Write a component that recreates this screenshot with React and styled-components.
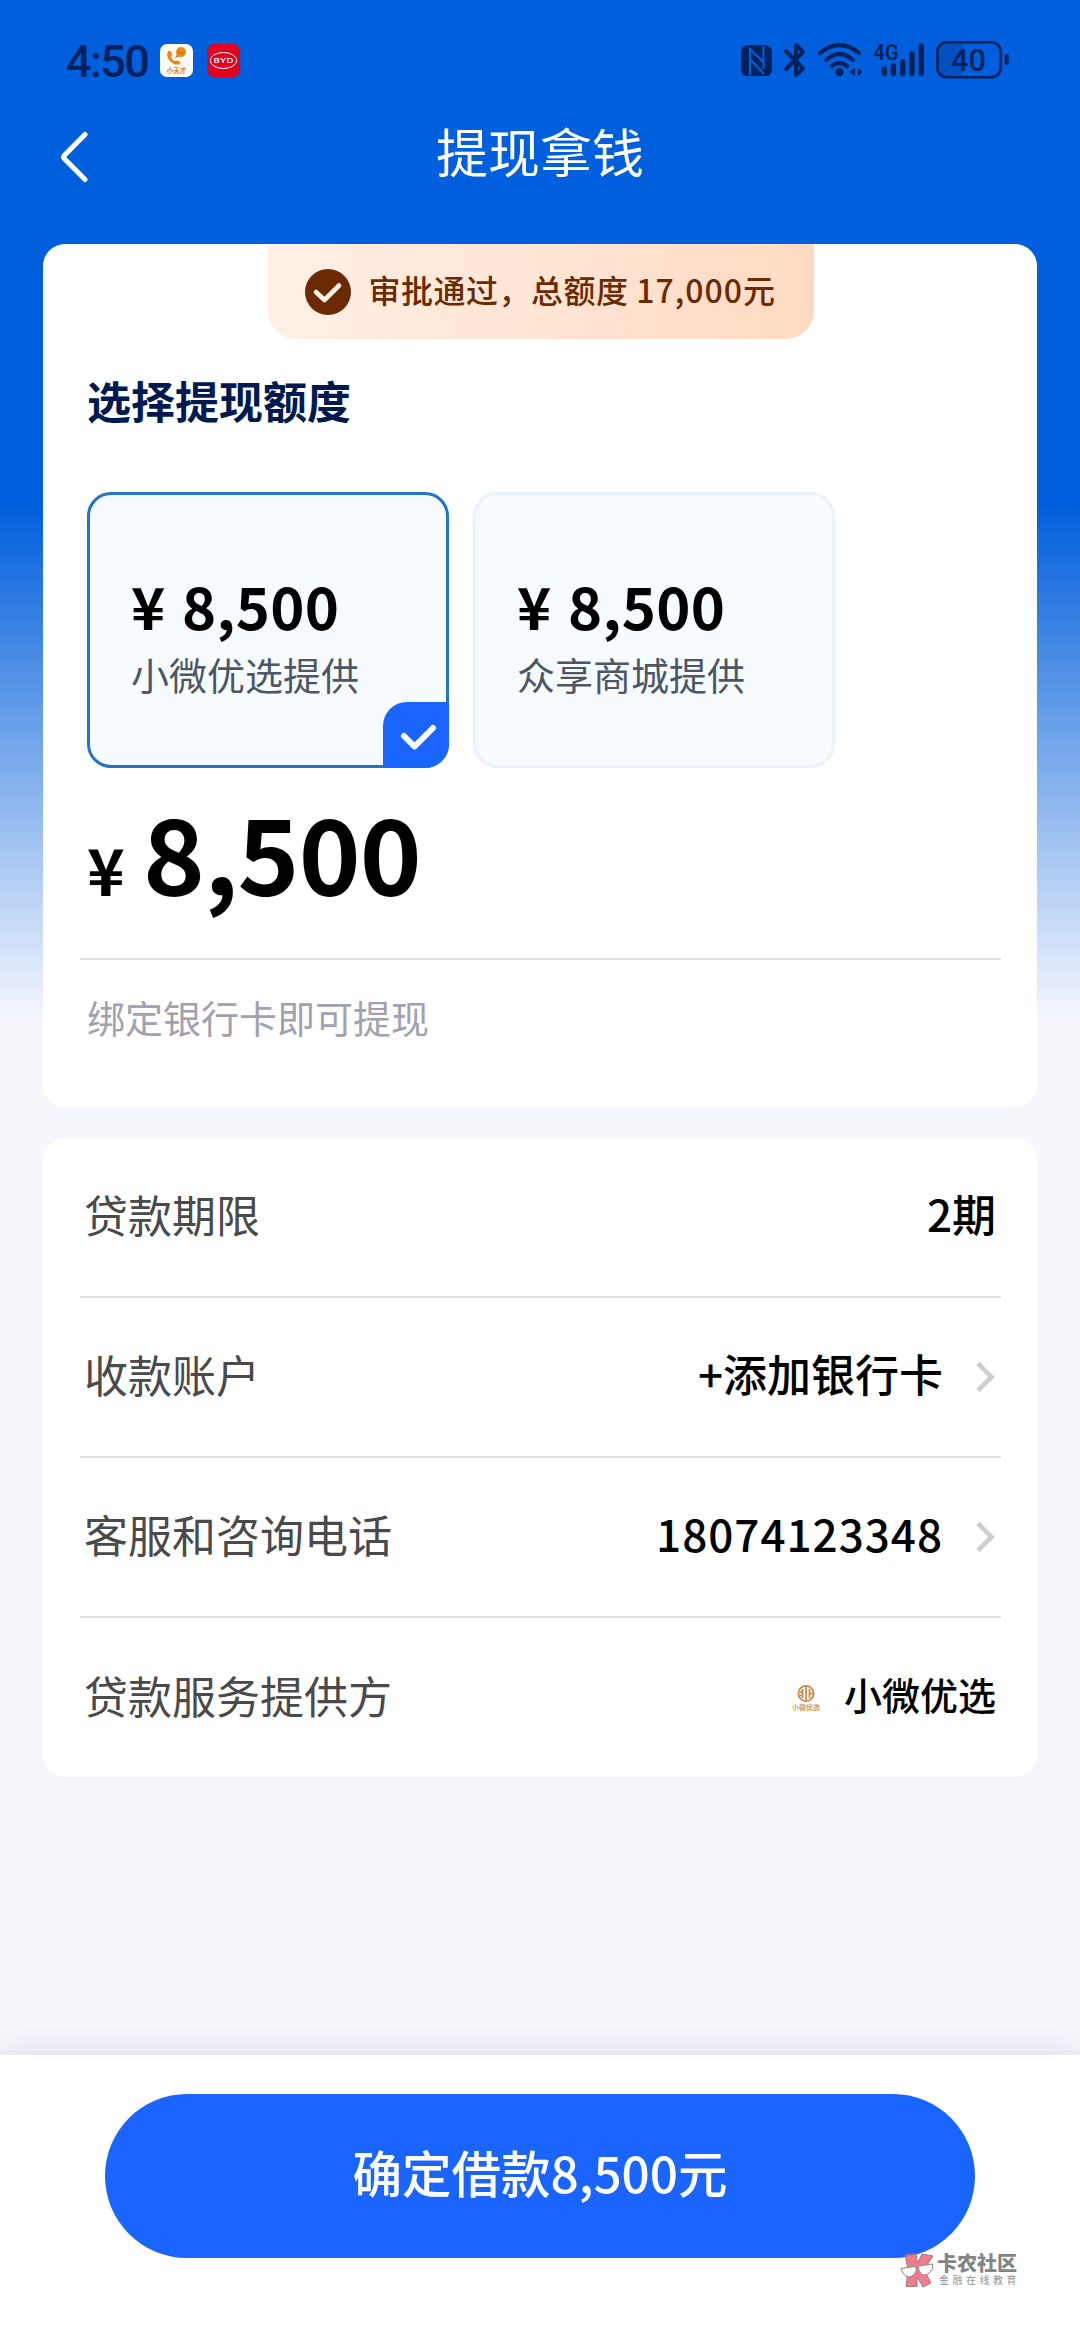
import React from 'react'
import styled, { createGlobalStyle } from 'styled-components'

const options = [
    { id: 1, amount: '8,500', provider: '小微优选提供' },
    { id: 2, amount: '8,500', provider: '众享商城提供' },
]

const App = () => {

    const [selected, setSelected] = React.useState(1)

    return (
        <Page>
            <GlobalStyle />

            <StatusBar>
                <StatusGroup>
                    <Clock>4:50</Clock>
                    <PhoneAppIcon />
                    <BydIcon />
                </StatusGroup>
                <SystemIcons />
            </StatusBar>

            <NavBar>
                <BackButton>
                    <svg width="28" height="52" viewBox="0 0 28 52" fill="none" stroke="#fff" strokeWidth="5" strokeLinecap="round" strokeLinejoin="round">
                        <path d="M25 3.5 L4.2 24.4 Q2.8 26 4.2 27.6 L25 48.5" />
                    </svg>
                </BackButton>
                <NavTitle>提现拿钱</NavTitle>
            </NavBar>

            <Content>
                <AmountCard>
                    <ApprovedBadge>
                        <svg width="46" height="46" viewBox="0 0 46 46" fill="none">
                            <circle cx="23" cy="23" r="23" fill="#6b2a02" />
                            <path d="M11 23 L19.5 31 L34 16.5" stroke="#fff1e6" strokeWidth="4.6" strokeLinecap="round" strokeLinejoin="round" />
                        </svg>
                        <BadgeText>审批通过，总额度 <Digits gap="1px">17,000</Digits>元</BadgeText>
                    </ApprovedBadge>

                    <SectionTitle>选择提现额度</SectionTitle>

                    <OptionList>
                        { options.map(item =>
                            <Option key={item.id} active={item.id === selected} onClick={() => setSelected(item.id)}>
                                <OptionPrice><OptionYen>¥</OptionYen>{item.amount}</OptionPrice>
                                <OptionProvider>{item.provider}</OptionProvider>
                                { item.id === selected &&
                                    <OptionCheck>
                                        <svg width="66" height="66" viewBox="0 0 66 66" fill="none" stroke="#fff" strokeWidth="6" strokeLinecap="round" strokeLinejoin="round">
                                            <path d="M21 34 L31.5 44.5 L50 26" />
                                        </svg>
                                    </OptionCheck>
                                }
                            </Option>
                        )}
                    </OptionList>

                    <Total>
                        <TotalYen>¥</TotalYen>
                        <TotalValue>8,500</TotalValue>
                    </Total>
                    <Hint>绑定银行卡即可提现</Hint>
                </AmountCard>

                <DetailCard>
                    <DetailRow>
                        <Label>贷款期限</Label>
                        <Value><ValueText>2期</ValueText></Value>
                    </DetailRow>
                    <DetailRow>
                        <Label>收款账户</Label>
                        <Value><ValueText>+添加银行卡</ValueText><Chevron /></Value>
                    </DetailRow>
                    <DetailRow>
                        <Label>客服和咨询电话</Label>
                        <Value><ValueText><Digits gap="1px">18074123348</Digits></ValueText><Chevron /></Value>
                    </DetailRow>
                    <DetailRow>
                        <Label>贷款服务提供方</Label>
                        <Value small>
                            <ProviderLogo />
                            <ValueText>小微优选</ValueText>
                        </Value>
                    </DetailRow>
                </DetailCard>
            </Content>

            <Footer>
                <SubmitButton>确定借款8,500元</SubmitButton>
            </Footer>

            <Watermark>
                <WatermarkLogo />
                <WatermarkText>
                    <WatermarkName>卡农社区</WatermarkName>
                    <WatermarkSub>金融在线教育</WatermarkSub>
                </WatermarkText>
            </Watermark>
        </Page>
    )
}

const PhoneAppIcon = () => (
    <AppIcon bg="#fbfbf4">
        <svg width="33" height="33" viewBox="0 0 33 33">
            <path d="M8 7 q3 -1 4 3 q0 2 -1 3 q1 3 4 4 q2 -1 4 0 q2 2 1 3 q-3 1 -6 0 q-6 -3 -7 -9 z" fill="#e88a1a" />
            <circle cx="21" cy="8" r="5" fill="#e88a1a" />
            <path d="M17 10 l-2 4 l5 -1.5 z" fill="#e88a1a" />
            <path d="M18.5 8.5 q2.5 2.5 5 0" stroke="#a85c08" fill="none" />
            <text x="16.5" y="28.5" textAnchor="middle" fontSize="6.5" fontWeight="700" fill="#d9821a">小天才</text>
        </svg>
    </AppIcon>
)

const BydIcon = () => (
    <AppIcon bg="#e3001f">
        <svg width="33" height="33" viewBox="0 0 33 33">
            <ellipse cx="16.5" cy="16.5" rx="13.2" ry="8" fill="none" stroke="#fff" strokeWidth="1" />
            <text x="16.5" y="18.9" textAnchor="middle" textLength="20" lengthAdjust="spacingAndGlyphs" fontSize="6.5" fontWeight="500" fontFamily="Inter" fill="#fff">BYD</text>
        </svg>
    </AppIcon>
)

const SystemIcons = () => (
    <svg width="272" height="40" viewBox="0 0 272 40" fill="none">
        {/* nfc */}
        <path d="M9 5 H24 Q32 5 32 13 V28 Q32 36 27 36 H6 Q1 36 1 28 V13 Q1 5 9 5 Z" fill="#00225c" />
        <path d="M10 35 V9 L24 23 M10 19 L24 34 M23.500 6 V29" stroke="#005fdc" strokeWidth="2" />
        {/* bluetooth */}
        <path d="M46 11 L63 28.5 L56 35 V5 L63 12 L46 29" stroke="#00225c" strokeWidth="4" strokeLinejoin="round" strokeLinecap="round" />
        {/* wifi */}
        <g stroke="#00225c" strokeWidth="4.2" strokeLinecap="round">
            <path d="M80 13 Q99.5 -3 119 13" />
            <path d="M86 20 Q99.5 8 113 20" />
            <path d="M92 26 Q99.5 20 107 26" />
        </g>
        <circle cx="99.5" cy="32" r="4.2" fill="#00225c" />
        <path d="M115 28 V36 L109 32 Z M118 28 V36 L122.5 32 Z" fill="#00225c" />
        {/* mobile signal */}
        <text x="133.5" y="19.5" fontSize="22" fontWeight="600" fontFamily="Roboto" textLength="25" lengthAdjust="spacingAndGlyphs" fill="#00225c">4G</text>
        <g stroke="#00225c" strokeWidth="5.4" strokeLinecap="round">
            <path d="M144.3 29 V33.5 M153.3 26 V33.5 M162.700 22 V33.5 M172 14 V33.5 M181.3 6 V33.5" />
        </g>
        {/* battery */}
        <path d="M206 3 H222 V37 H206 Q198 37 198 29 V11 Q198 3 206 3 Z" fill="#0050bf" />
        <rect x="197.3" y="2.3" width="63.5" height="35" rx="9.5" stroke="#00225c" strokeWidth="2.6" />
        <text x="228.5" y="31" textAnchor="middle" fontSize="32" fontWeight="500" fontFamily="Roboto" textLength="35" lengthAdjust="spacingAndGlyphs" fill="#00225c">40</text>
        <rect x="264.7" y="14" width="4" height="11" rx="2" fill="#00225c" />
    </svg>
)

const Chevron = () => (
    <ChevronBox width="20" height="32" viewBox="0 0 20 32" fill="none" stroke="#cfcfcf" strokeWidth="4.6">
        <path d="M2 2.5 L15.5 16 L2 29.5" />
    </ChevronBox>
)

const ProviderLogo = () => (
    <ProviderLogoBox width="30" height="28" viewBox="0 0 30 28" fill="none">
        <circle cx="15" cy="9.5" r="7.6" stroke="#cf8a45" strokeWidth="1.8" />
        <path d="M15 3 V16 M11.5 5 V14 M18.5 5 V14 M8.5 8 H11.5 M8.5 11.5 H11.5 M18.5 9.5 H22" stroke="#d08238" strokeWidth="1.7" />
        <text x="15" y="25.5" textAnchor="middle" fontSize="7" fontWeight="700" fill="#d99a4c">小微优选</text>
    </ProviderLogoBox>
)

const WatermarkLogo = () => (
    <svg width="36" height="38" viewBox="0 0 36 38" stroke="#8a7478" strokeWidth="1" strokeLinejoin="round">
        <path d="M5 2.5 L16 1.5 L17.5 11 L22 2 L33 4 L24 18 L31 31 L23 35 L17 25 L17 34.5 L6 34.5 L8 18 Z" fill="#ee6f80" />
        <path d="M1 16.5 L14 14.5 Q17 15 16.5 18 Q14 25 8.5 25 Q3 24 1 16.5 Z" fill="#fff" />
        <path d="M18.5 14 L32.5 12 Q34 17 29.5 21 Q24 25 20.5 21 Q18 18 18.5 14 Z" fill="#fff" />
    </svg>
)

const GlobalStyle = createGlobalStyle`
    body {
        margin: 0;
        font-family: "Noto Sans CJK SC", "Noto Sans", sans-serif;
    }
    * {
        box-sizing: border-box;
    }
    svg {
        display: block;
        flex-shrink: 0;
    }
`

const Page = styled.div`
    position: relative;
    width: 1080px;
    height: 2340px;
    display: flex;
    flex-direction: column;
    overflow: hidden;
    background: linear-gradient(180deg, #005fdc 0, #005fdc 505px, #f6f7fd 1020px);
`

const StatusBar = styled.div`
    height: 100px;
    padding: 40px 68px 0 66px;
    display: flex;
    justify-content: space-between;
    align-items: flex-start;
`

const StatusGroup = styled.div`
    height: 41px;
    display: flex;
    align-items: center;
`

const Clock = styled.div`
    width: 94px;
    padding-top: 1px;
    font-family: Roboto, sans-serif;
    font-size: 45px;
    font-weight: 500;
    line-height: 41px;
    letter-spacing: -1.6px;
    color: #00225c;
`

const AppIcon = styled.div`
    width: 33px;
    height: 33px;
    margin-right: 14px;
    border-radius: 7px;
    overflow: hidden;
    background: ${props => props.bg};
`

const NavBar = styled.div`
    height: 144px;
    padding: 0 60px;
    display: flex;
    align-items: flex-start;
`

const BackButton = styled.div`
    width: 100px;
    padding-top: 31px;
    cursor: pointer;
`

const NavTitle = styled.div`
    flex: 1;
    margin-right: 100px;
    text-align: center;
    font-size: 52px;
    line-height: 102px;
    color: #fff;
`

const Content = styled.div`
    flex: 1;
    padding: 0 43px;
    display: flex;
    flex-direction: column;
    gap: 31px;
`

const AmountCard = styled.div`
    height: 863px;
    padding: 0 36px 0 37px;
    display: flex;
    flex-direction: column;
    border-radius: 22px;
    background: #fff;
`

const ApprovedBadge = styled.div`
    align-self: center;
    width: 546px;
    height: 95px;
    padding-left: 37px;
    display: flex;
    align-items: center;
    gap: 18px;
    border-radius: 0 0 28px 28px;
    background: linear-gradient(95deg, #fff0e6, #ffdac2);
`

const BadgeText = styled.div`
    padding-bottom: 5px;
    font-size: 32px;
    font-weight: 500;
    line-height: 48px;
    letter-spacing: 0.5px;
    white-space: pre;
    color: #6b2a02;
`

const Digits = styled.span`
    letter-spacing: ${props => props.gap};
`

const SectionTitle = styled.div`
    margin-top: 29px;
    padding-left: 7px;
    font-size: 44px;
    font-weight: 700;
    line-height: 64px;
    color: #001a4f;
`

const OptionList = styled.div`
    margin-top: 60px;
    padding-left: 7px;
    display: flex;
    gap: 24px;
`

const Option = styled.div`
    position: relative;
    width: 362px;
    height: 276px;
    padding: 70px 0 0 41px;
    border: 3px solid ${props => props.active ? '#2673cc' : '#edf3fc'};
    border-radius: 24px;
    background: #f6fbff;
    cursor: pointer;
`

const OptionPrice = styled.div`
    display: flex;
    font-size: 58px;
    font-weight: 700;
    line-height: 80px;
    letter-spacing: 0.3px;
    color: #000;
`

const OptionYen = styled.span`
    width: 51px;
`

const OptionProvider = styled.div`
    margin-top: 2px;
    font-size: 38px;
    line-height: 54px;
    color: #4d5763;
`

const OptionCheck = styled.div`
    position: absolute;
    right: -3px;
    bottom: -3px;
    border-radius: 24px 0 24px 0;
    background: #1a64ff;
`

const Total = styled.div`
    height: 192px;
    padding: 0 7px;
    display: flex;
    align-items: baseline;
    border-bottom: 2px solid #dedede;
    font-weight: 700;
    color: #000;
`

const TotalYen = styled.div`
    width: 56px;
    padding-bottom: 2px;
    font-size: 64px;
`

const TotalValue = styled.div`
    font-size: 105px;
    line-height: 164px;
    letter-spacing: -0.8px;
`

const Hint = styled.div`
    padding: 29px 7px 0;
    font-size: 38px;
    line-height: 56px;
    color: #a2a1b0;
`

const DetailCard = styled.div`
    height: 639px;
    padding: 0 36px 0 37px;
    border-radius: 22px;
    background: #fff;
`

const DetailRow = styled.div`
    height: 160px;
    padding: 0 5px 0 4px;
    display: flex;
    justify-content: space-between;
    align-items: center;
    border-bottom: 2px solid #dedede;

    &:last-child {
        border-bottom: none;
    }
`

const Label = styled.div`
    padding-bottom: 7px;
    font-size: 44px;
    line-height: 64px;
    color: #4a4a4a;
`

const Value = styled.div`
    display: flex;
    align-items: center;
    font-size: ${props => props.small ? '38px' : '44px'};
    font-weight: 500;
    line-height: 64px;
    color: #000;
`

const ValueText = styled.div`
    padding-bottom: 9px;
`

const ChevronBox = styled.svg`
    margin-left: 33px;
`

const ProviderLogoBox = styled.svg`
    margin-right: 23px;
`

const Footer = styled.div`
    height: 285px;
    padding-top: 39px;
    display: flex;
    justify-content: center;
    align-items: flex-start;
    background: #fff;
    box-shadow: 0 0 30px rgba(40, 40, 60, 0.14);
`

const SubmitButton = styled.div`
    width: 870px;
    height: 164px;
    padding-bottom: 9px;
    display: flex;
    justify-content: center;
    align-items: center;
    border-radius: 82px;
    background: #1a64ff;
    color: #fff;
    font-size: 49.5px;
    font-weight: 500;
    cursor: pointer;
`

// floats over the footer and the button edge
const Watermark = styled.div`
    position: absolute;
    left: 900px;
    top: 2252px;
    display: flex;
    opacity: 0.9;
`

const WatermarkText = styled.div`
    padding-left: 1px;
`

const WatermarkName = styled.div`
    font-size: 20px;
    font-weight: 900;
    line-height: 21px;
    color: #777;
`

const WatermarkSub = styled.div`
    padding-left: 2px;
    font-size: 10px;
    line-height: 13px;
    letter-spacing: 3.5px;
    color: #888;
`

export default App
